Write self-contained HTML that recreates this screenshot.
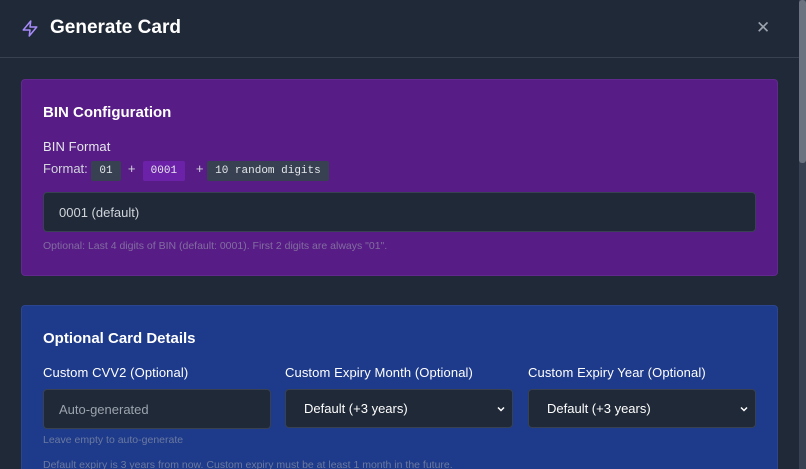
<!DOCTYPE html>
<html style="width:806px;height:469px;overflow:hidden"><head><style>
*{box-sizing:border-box;margin:0;padding:0}
body{width:806px;height:469px;overflow:hidden;background:#1f2937;font-family:"Liberation Sans",sans-serif;position:relative}
.hdr{position:absolute;left:0;top:0;width:799px;height:58px;border-bottom:1px solid #374151}
.hdr h1{position:absolute;left:50px;top:17px;font-size:19px;color:#fff;font-weight:bold}
.x{position:absolute;left:756px;top:18px;color:#9ca3af;font-size:17px}
.sb{position:absolute;left:799px;top:0;width:7px;height:469px;background:#374151}
.sb div{width:7px;height:163px;background:#6b7280;border-radius:3px}
.box{position:absolute;left:21px;width:757px;border-radius:4px;border:1px solid rgba(255,255,255,.06)}
.p{top:79px;height:197px;background:#581c87}
.b{top:305px;height:180px;background:#1e3a8a}
h2{position:absolute;font-size:15px;color:#fff;font-weight:bold}
.lbl{position:absolute;font-size:13px;color:#fff;font-weight:normal;letter-spacing:.1px}
.inp{position:absolute;background:#1f2937;border:1px solid #374151;border-radius:4px;color:#d1d5db;font-size:13px;padding-left:15px;display:flex;align-items:center}
.hint{position:absolute;font-size:10.5px;color:#9ca3af;opacity:.6}
.code{display:inline-block;font-family:"Liberation Mono",monospace;font-size:11px;color:#e5e7eb;padding:4px 8px;border-radius:2px}
.chev{position:absolute;right:6px;top:14px}
</style></head><body>
<div class="hdr">
<svg style="position:absolute;left:21px;top:19px" width="18" height="19" viewBox="0 0 24 24" fill="none" stroke="#a78bfa" stroke-width="2" stroke-linejoin="round"><path d="M13 2L3 14h9l-1 8 10-12h-9l1-8z"/></svg>
<h1>Generate Card</h1><div class="x">✕</div></div>
<div class="sb"><div></div></div>
<div class="box p">
<h2 style="left:21px;top:24px">BIN Configuration</h2>
<div class="lbl" style="left:21px;top:59px;color:#e5e7eb">BIN Format</div>
<div style="position:absolute;left:21px;top:81px;font-size:13px;color:#d1d5db;white-space:nowrap">Format: <span class="code" style="background:#374151">01</span>&nbsp; + &nbsp;<span class="code" style="background:#6b21a8">0001</span>&nbsp;&nbsp; + <span class="code" style="background:#374151">10 random digits</span></div>
<div class="inp" style="left:21px;top:112px;width:713px;height:40px">0001 (default)</div>
<div class="hint" style="left:21px;top:160px">Optional: Last 4 digits of BIN (default: 0001). First 2 digits are always "01".</div>
</div>
<div class="box b">
<h2 style="left:21px;top:24px">Optional Card Details</h2>
<div class="lbl" style="left:21px;top:59px">Custom CVV2 (Optional)</div>
<div class="lbl" style="left:263px;top:59px">Custom Expiry Month (Optional)</div>
<div class="lbl" style="left:506px;top:59px">Custom Expiry Year (Optional)</div>
<div class="inp" style="left:21px;top:83px;width:228px;height:40px;color:#9ca3af">Auto-generated</div>
<div class="inp" style="left:263px;top:83px;width:228px;height:39px;color:#fff;padding-left:18px">Default (+3 years)<svg class="chev" width="10" height="10" viewBox="0 0 10 10"><path d="M2 3.5l3 3 3-3" fill="none" stroke="#fff" stroke-width="1.5"/></svg></div>
<div class="inp" style="left:506px;top:83px;width:228px;height:39px;color:#fff;padding-left:18px">Default (+3 years)<svg class="chev" width="10" height="10" viewBox="0 0 10 10"><path d="M2 3.5l3 3 3-3" fill="none" stroke="#fff" stroke-width="1.5"/></svg></div>
<div class="hint" style="left:21px;top:128px">Leave empty to auto-generate</div>
<div class="hint" style="left:21px;top:153px">Default expiry is 3 years from now. Custom expiry must be at least 1 month in the future.</div>
</div>
</body></html>
